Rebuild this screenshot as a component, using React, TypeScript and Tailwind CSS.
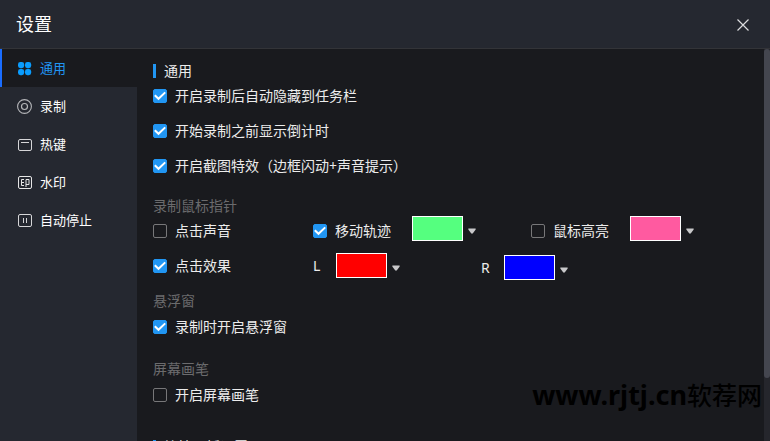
import { useState } from 'react';
import type { ReactNode } from 'react';

const GeneralIcon = () => (
  <svg width="15" height="15" viewBox="0 0 15 15" fill="#0a9dff" aria-hidden="true">
    <rect x="1" y="1" width="6.2" height="6.2" rx="2.4" />
    <rect x="8" y="1" width="6.2" height="6.2" rx="2.4" />
    <rect x="1" y="8" width="6.2" height="6.2" rx="2.4" />
    <rect x="8" y="8" width="6.2" height="6.2" rx="2.4" />
  </svg>
);

const RecordIcon = () => (
  <svg width="15" height="15" viewBox="0 0 15 15" fill="none" stroke="#b4b5b8" aria-hidden="true">
    <circle cx="7.5" cy="7.5" r="6.9" strokeWidth="1.1" />
    <circle cx="7.5" cy="7.5" r="3" strokeWidth="1.2" />
  </svg>
);

const HotkeyIcon = () => (
  <svg width="15" height="15" viewBox="0 0 15 15" fill="none" stroke="#d6d6d8" aria-hidden="true">
    <rect x="1.5" y="2.5" width="13" height="11" rx="1.5" />
    <path d="M4 5.5h8" />
  </svg>
);

const WatermarkIcon = () => (
  <svg width="15" height="15" viewBox="0 0 15 15" fill="none" stroke="#e6e6e6" aria-hidden="true">
    <rect x="1.5" y="1.5" width="13" height="12" rx="1.5" />
    <path d="M7 4.5H4.5v6H7M4.5 7.5H7M9 12V4.5h3v5H9" />
  </svg>
);

const AutoStopIcon = () => (
  <svg width="15" height="15" viewBox="0 0 15 15" fill="none" stroke="#d6d6d8" aria-hidden="true">
    <rect x="1.5" y="1.5" width="13" height="12" rx="1.5" />
    <path d="M6.5 5v5M9.5 5v5" />
  </svg>
);

const navItems = [
  { id: 'general', label: '通用', icon: GeneralIcon },
  { id: 'record', label: '录制', icon: RecordIcon },
  { id: 'hotkey', label: '热键', icon: HotkeyIcon },
  { id: 'watermark', label: '水印', icon: WatermarkIcon },
  { id: 'autostop', label: '自动停止', icon: AutoStopIcon },
];

const Option = ({ label, checked = false }: { label: string; checked?: boolean }) => {
  const [on, setOn] = useState(checked);

  return (
    <label className="flex h-5 items-center gap-2">
      <span className="relative flex">
        <input
          type="checkbox"
          checked={on}
          onChange={() => setOn(!on)}
          className="size-3.5 appearance-none rounded-xs border border-[#777779] checked:border-[#2196f3] checked:bg-[#2196f3]"
        />
        {on && (
          <svg
            viewBox="0 0 14 14"
            fill="none"
            stroke="white"
            strokeWidth="2"
            className="pointer-events-none absolute inset-0 size-3.5"
            aria-hidden="true"
          >
            <path d="M1.8 6.2 5.5 9.8 12.2 3.4" />
          </svg>
        )}
      </span>
      <span className="whitespace-nowrap">{label}</span>
    </label>
  );
};

const ColorPicker = ({ name, color }: { name: string; color: string }) => (
  <button type="button" aria-label={name} className="flex items-center gap-1">
    <span className={`h-[25px] w-[51px] border border-white ${color}`} />
    <svg width="10" height="8" viewBox="0 0 10 8" fill="#c8c8ca" className="mt-1" aria-hidden="true">
      <path d="M1.5 1.5h7q.6.6 0 1.2L5.9 6.2q-.9.9-1.8 0L1.5 2.7q-.6-.6 0-1.2Z" />
    </svg>
  </button>
);

const SectionTitle = ({ children }: { children: ReactNode }) => (
  <h2 className="flex h-5 items-center gap-2">
    <span className="h-3.5 w-[3px] bg-[#2196f3]" />
    {children}
  </h2>
);

const GroupTitle = ({ children }: { children: ReactNode }) => (
  <h3 className="h-5 text-[#6b6b6d]">{children}</h3>
);

const App = () => {
  const [active, setActive] = useState('general');

  return (
    <div className="relative flex h-screen flex-col overflow-hidden bg-[#191a1e] font-['Noto_Sans','Noto_Sans_CJK_SC',sans-serif] text-sm leading-5 text-[#ececec]">
      <header className="flex h-[49px] shrink-0 items-center justify-between border-b border-[#333438] bg-[#252830] pr-5 pl-4">
        <h1 className="text-lg text-white">设置</h1>
        <button type="button" aria-label="关闭">
          <svg width="14" height="14" viewBox="0 0 14 14" stroke="#dcdcde" strokeWidth="1.2" aria-hidden="true">
            <path d="M1.5 2.5l11 11M12.5 2.5l-11 11" />
          </svg>
        </button>
      </header>

      <div className="flex min-h-0 flex-1">
        <nav className="w-[137px] shrink-0 bg-[#252830] text-[13px]">
          {navItems.map(({ id, label, icon: Icon }) => (
            <button
              key={id}
              type="button"
              onClick={() => setActive(id)}
              className={`flex h-[38px] w-full items-center gap-2 border-l-2 pl-[15px] ${
                active === id
                  ? 'border-[#1a6dff] bg-[#191a1e] text-[#2196f3]'
                  : 'border-transparent text-white'
              }`}
            >
              <Icon />
              {label}
            </button>
          ))}
        </nav>

        <main className="min-w-0 flex-1 overflow-hidden pt-3 pl-4">
          <SectionTitle>通用</SectionTitle>
          <div className="mt-[5px] flex flex-col gap-[15px]">
            <Option label="开启录制后自动隐藏到任务栏" checked />
            <Option label="开始录制之前显示倒计时" checked />
            <Option label="开启截图特效（边框闪动+声音提示）" checked />
          </div>

          <div className="mt-5">
            <GroupTitle>录制鼠标指针</GroupTitle>
            <div className="flex items-center">
              <div className="w-40">
                <Option label="点击声音" />
              </div>
              <div className="flex w-[218px] items-center gap-[21px]">
                <Option label="移动轨迹" checked />
                <div className="pb-1">
                  <ColorPicker name="移动轨迹颜色" color="bg-[#55ff7f]" />
                </div>
              </div>
              <div className="flex items-center gap-[21px]">
                <Option label="鼠标高亮" />
                <div className="pb-1">
                  <ColorPicker name="鼠标高亮颜色" color="bg-[#ff5aa0]" />
                </div>
              </div>
            </div>
            <div className="mt-1.5 flex items-center">
              <div className="w-40">
                <Option label="点击效果" checked />
              </div>
              <div className="flex w-[168px] items-center">
                <span className="w-[23px]">L</span>
                <ColorPicker name="左键颜色" color="bg-[#ff0000]" />
              </div>
              <div className="flex items-center pt-1">
                <span className="w-[23px]">R</span>
                <ColorPicker name="右键颜色" color="bg-[#0000ff]" />
              </div>
            </div>
          </div>

          <div className="mt-[11px]">
            <GroupTitle>悬浮窗</GroupTitle>
            <div className="mt-1.5">
              <Option label="录制时开启悬浮窗" checked />
            </div>
          </div>

          <div className="mt-[22px]">
            <GroupTitle>屏幕画笔</GroupTitle>
            <div className="mt-1.5">
              <Option label="开启屏幕画笔" />
            </div>
          </div>

          <div className="mt-8">
            <SectionTitle>快捷面板设置</SectionTitle>
          </div>
        </main>

        <div className="w-1.5 shrink-0 bg-[#25262c]">
          <div className="h-[84%] rounded-full bg-[#44464f]" />
        </div>
      </div>

      <p className="pointer-events-none absolute right-2 bottom-7 text-[25px] leading-9 font-medium text-black">
        <span className="text-[27px] font-bold">www.rjtj.cn</span>软荐网
      </p>
    </div>
  );
};

export default App;
